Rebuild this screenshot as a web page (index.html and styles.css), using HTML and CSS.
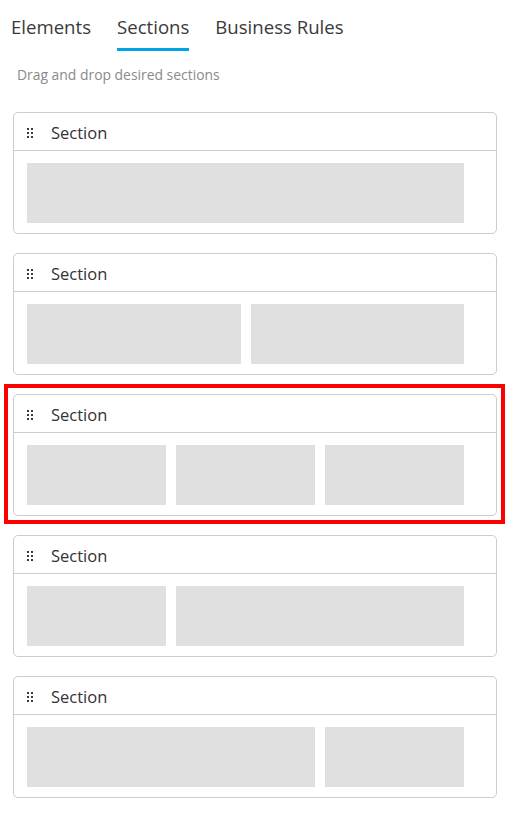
FILE: index.html
```html
<!DOCTYPE html>
<html lang="en">
<head>
    <meta charset="UTF-8">
    <meta name="viewport" content="width=device-width, initial-scale=1.0">
    <title>Sections</title>
    <link rel="stylesheet" href="styles.css">
</head>
<body>
    <nav class="tabs">
        <span class="tab">Elements</span>
        <span class="tab active">Sections</span>
        <span class="tab">Business Rules</span>
    </nav>

    <p class="hint">Drag and drop desired sections</p>

    <div class="section-list">
        <div class="section-item">
            <div class="section-card">
                <div class="section-header">
                    <span class="handle"><i></i><i></i><i></i><i></i><i></i><i></i></span>
                    <span class="section-title">Section</span>
                </div>
                <div class="section-body cols-1">
                    <div class="slot"></div>
                </div>
            </div>
        </div>

        <div class="section-item">
            <div class="section-card">
                <div class="section-header">
                    <span class="handle"><i></i><i></i><i></i><i></i><i></i><i></i></span>
                    <span class="section-title">Section</span>
                </div>
                <div class="section-body cols-2">
                    <div class="slot"></div>
                    <div class="slot"></div>
                </div>
            </div>
        </div>

        <div class="section-item selected">
            <div class="section-card">
                <div class="section-header">
                    <span class="handle"><i></i><i></i><i></i><i></i><i></i><i></i></span>
                    <span class="section-title">Section</span>
                </div>
                <div class="section-body cols-3">
                    <div class="slot"></div>
                    <div class="slot"></div>
                    <div class="slot"></div>
                </div>
            </div>
        </div>

        <div class="section-item">
            <div class="section-card">
                <div class="section-header">
                    <span class="handle"><i></i><i></i><i></i><i></i><i></i><i></i></span>
                    <span class="section-title">Section</span>
                </div>
                <div class="section-body cols-3">
                    <div class="slot"></div>
                    <div class="slot span-2"></div>
                </div>
            </div>
        </div>

        <div class="section-item">
            <div class="section-card">
                <div class="section-header">
                    <span class="handle"><i></i><i></i><i></i><i></i><i></i><i></i></span>
                    <span class="section-title">Section</span>
                </div>
                <div class="section-body cols-3">
                    <div class="slot span-2"></div>
                    <div class="slot"></div>
                </div>
            </div>
        </div>
    </div>
</body>
</html>
```

FILE: styles.css
```css
:root {
    --text: #333333;
    --text-muted: #8a8a8a;
    --accent: #00a2e8;
    --border: #cccccc;
    --slot: #e0e0e0;
    --selected: #ff0000;
}

* {
    margin: 0;
    padding: 0;
    box-sizing: border-box;
}

body {
    font-family: 'Open Sans', Arial, sans-serif;
    color: var(--text);
    background-color: #ffffff;
    width: 512px;
}

.tabs {
    display: flex;
    gap: 26px;
    padding: 0 11px;
}

.tab {
    font-size: 18.6px;
    line-height: 24px;
    padding: 15px 0 9px;
    border-bottom: 3px solid transparent;
    color: #3a3a3a;
}

.tab.active {
    border-bottom-color: var(--accent);
}

.hint {
    font-size: 13.9px;
    line-height: 20px;
    color: var(--text-muted);
    margin: 14px 0 0 17px;
}

.section-list {
    display: flex;
    flex-direction: column;
    gap: 1px;
    margin: 17px 7px 0 4px;
}

.section-item {
    border: 4px solid transparent;
    padding: 6px 4px 4px 5px;
}

.section-item.selected {
    border-color: var(--selected);
}

.section-card {
    border: 1px solid var(--border);
    border-radius: 5px;
    background-color: #ffffff;
}

.section-header {
    display: flex;
    align-items: center;
    gap: 18px;
    padding: 9px 13px 6px;
    border-bottom: 1px solid var(--border);
}

.handle {
    display: grid;
    grid-template-columns: 2px 2px;
    gap: 2px;
    margin-top: -1px;
}

.handle i {
    width: 2px;
    height: 2px;
    background-color: #3c3c3c;
}

.section-title {
    font-size: 16.5px;
    line-height: 22px;
}

.section-body {
    display: grid;
    gap: 10px;
    padding: 12px 32px 10px 13px;
}

.cols-1 {
    grid-template-columns: 1fr;
}

.cols-2 {
    grid-template-columns: 1fr 1fr;
}

.cols-3 {
    grid-template-columns: 1fr 1fr 1fr;
}

.span-2 {
    grid-column: span 2;
}

.slot {
    height: 60px;
    background-color: var(--slot);
}
```
